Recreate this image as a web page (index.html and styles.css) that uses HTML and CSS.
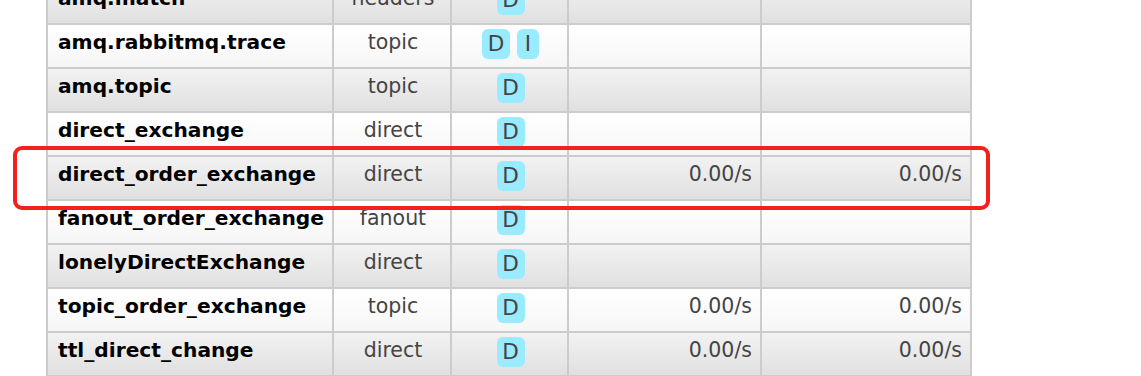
FILE: index.html
```html
<!DOCTYPE html>
<html>
<head>
<meta charset="utf-8">
<link rel="stylesheet" href="styles.css">
</head>
<body>
<div class="page">
  <table class="list">
    <tbody>
      <tr class="alt1">
        <td class="c-name">amq.match</td>
        <td class="c-type">headers</td>
        <td class="c-feat"><abbr>D</abbr></td>
        <td class="c-rate"></td>
        <td class="c-rate2"></td>
      </tr>
      <tr class="alt2">
        <td class="c-name">amq.rabbitmq.trace</td>
        <td class="c-type">topic</td>
        <td class="c-feat"><abbr>D</abbr><abbr class="i">I</abbr></td>
        <td class="c-rate"></td>
        <td class="c-rate2"></td>
      </tr>
      <tr class="alt1">
        <td class="c-name">amq.topic</td>
        <td class="c-type">topic</td>
        <td class="c-feat"><abbr>D</abbr></td>
        <td class="c-rate"></td>
        <td class="c-rate2"></td>
      </tr>
      <tr class="alt2">
        <td class="c-name">direct_exchange</td>
        <td class="c-type">direct</td>
        <td class="c-feat"><abbr>D</abbr></td>
        <td class="c-rate"></td>
        <td class="c-rate2"></td>
      </tr>
      <tr class="alt1">
        <td class="c-name">direct_order_exchange</td>
        <td class="c-type">direct</td>
        <td class="c-feat"><abbr>D</abbr></td>
        <td class="c-rate">0.00/s</td>
        <td class="c-rate2">0.00/s</td>
      </tr>
      <tr class="alt2">
        <td class="c-name">fanout_order_exchange</td>
        <td class="c-type">fanout</td>
        <td class="c-feat"><abbr>D</abbr></td>
        <td class="c-rate"></td>
        <td class="c-rate2"></td>
      </tr>
      <tr class="alt1">
        <td class="c-name">lonelyDirectExchange</td>
        <td class="c-type">direct</td>
        <td class="c-feat"><abbr>D</abbr></td>
        <td class="c-rate"></td>
        <td class="c-rate2"></td>
      </tr>
      <tr class="alt2">
        <td class="c-name">topic_order_exchange</td>
        <td class="c-type">topic</td>
        <td class="c-feat"><abbr>D</abbr></td>
        <td class="c-rate">0.00/s</td>
        <td class="c-rate2">0.00/s</td>
      </tr>
      <tr class="alt1">
        <td class="c-name">ttl_direct_change</td>
        <td class="c-type">direct</td>
        <td class="c-feat"><abbr>D</abbr></td>
        <td class="c-rate">0.00/s</td>
        <td class="c-rate2">0.00/s</td>
      </tr>
    </tbody>
  </table>
  <div class="highlight"></div>
</div>
</body>
</html>
```

FILE: styles.css
```css
html, body {
  margin: 0;
  padding: 0;
  background: #ffffff;
  overflow: hidden;
}

.page {
  position: relative;
  width: 1141px;
  height: 376px;
  overflow: hidden;
}

.list {
  margin-top: -21px;
  margin-left: 46px;
  width: 926px;
  table-layout: fixed;
  border-collapse: separate;
  border-spacing: 0;
  border-left: 2px solid #cccccc;
  border-top: 2px solid #cccccc;
  font-family: "DejaVu Sans", Verdana, sans-serif;
  font-size: 20.5px;
  line-height: 24px;
  color: #444444;
}

.list td {
  box-sizing: border-box;
  height: 44px;
  padding: 5px 8px 0 10px;
  vertical-align: top;
  border-right: 2px solid #cccccc;
  border-bottom: 2px solid #cccccc;
  white-space: nowrap;
}

.alt1 td {
  background: linear-gradient(to bottom, #f2f2f2 0%, #e0e0e0 100%);
}

.alt2 td {
  background: linear-gradient(to bottom, #ffffff 0%, #f6f6f6 100%);
}

.c-name {
  width: 286px;
  font-weight: bold;
  font-size: 20.2px;
  color: #000000;
}

.c-type {
  width: 118px;
  text-align: center;
}

.c-feat {
  width: 117px;
  text-align: center;
  font-size: 0;
}

.list td.c-feat {
  padding-top: 4px;
}

.c-rate {
  width: 193px;
  text-align: right;
}

.c-rate2 {
  width: 210px;
  text-align: right;
}

abbr {
  display: inline-block;
  min-width: 28px;
  height: 30px;
  box-sizing: border-box;
  padding: 0 5px;
  line-height: 30px;
  font-size: 21.5px;
  text-decoration: none;
  background: #99ebff;
  color: #444444;
  border-radius: 6px;
}

abbr.i {
  min-width: 22px;
  margin-left: 7px;
}

.highlight {
  position: absolute;
  left: 13px;
  top: 146px;
  width: 977px;
  height: 64px;
  box-sizing: border-box;
  border: 4px solid #f4201b;
  border-radius: 9px;
}
```
